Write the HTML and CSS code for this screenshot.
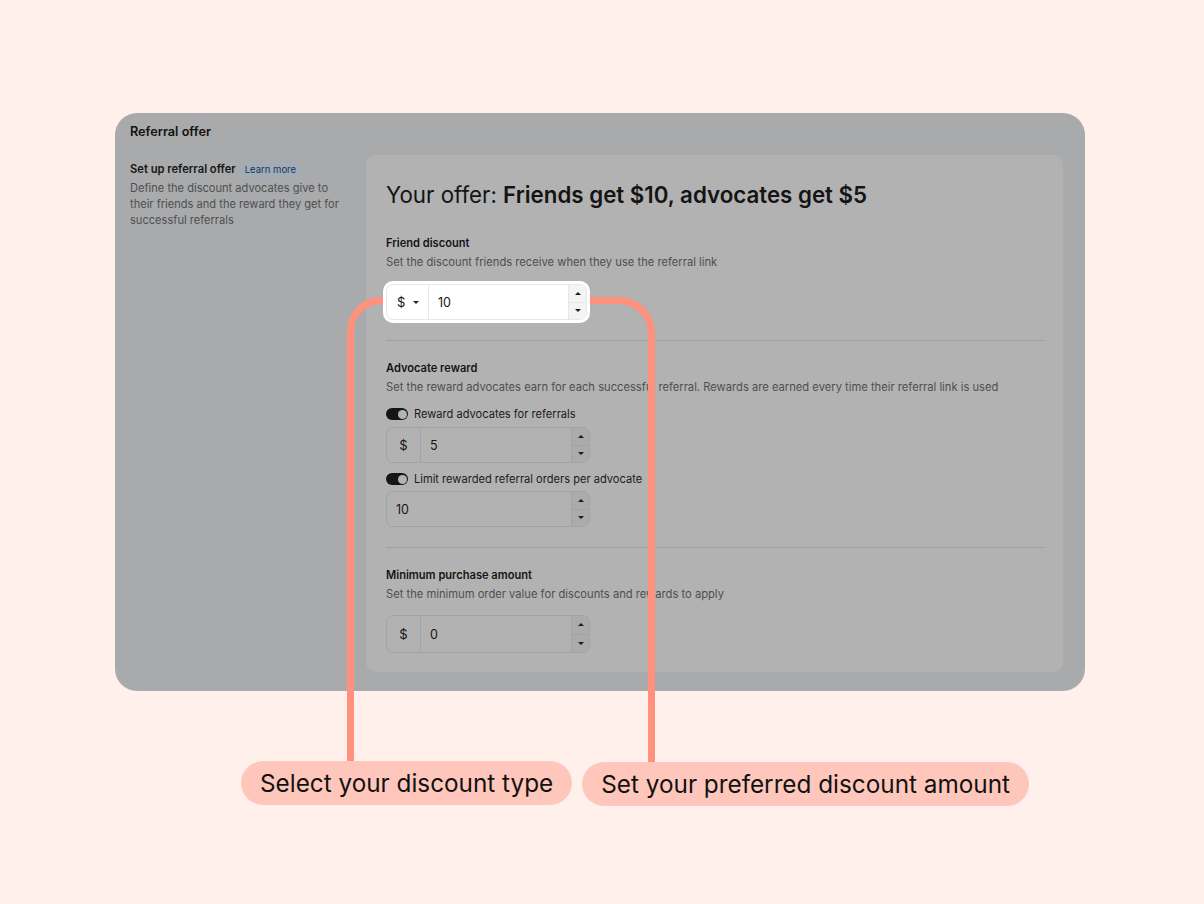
FILE: index.html
```html
<!DOCTYPE html>
<html lang="en">
<head>
<meta charset="utf-8">
<title>Referral offer</title>
<link rel="stylesheet" href="styles.css">
</head>
<body>
<div class="stage">
  <section class="panel">
    <h2 class="panel-title">Referral offer</h2>
    <div class="panel-body">
      <aside class="intro">
        <div class="intro-head">
          <span class="intro-title">Set up referral offer</span>
          <span class="badge">Learn more</span>
        </div>
        <p class="intro-text">Define the discount advocates give to their friends and the reward they get for successful referrals</p>
      </aside>
      <div class="card">
        <h1 class="offer">Your offer: <strong>Friends get $10, advocates get $5</strong></h1>

        <h3 class="group-title">Friend discount</h3>
        <p class="group-desc">Set the discount friends receive when they use the referral link</p>
        <div class="field field-hl">
          <div class="prefix prefix-select">$<span class="caret"></span></div>
          <div class="value">10</div>
          <div class="stepper"><span class="step"><i class="arr-up"></i></span><span class="step"><i class="arr-down"></i></span></div>
        </div>

        <hr class="divider">

        <h3 class="group-title">Advocate reward</h3>
        <p class="group-desc">Set the reward advocates earn for each successful referral. Rewards are earned every time their referral link is used</p>
        <div class="toggle-row toggle-first"><span class="toggle"><span class="knob"></span></span><span class="toggle-label">Reward advocates for referrals</span></div>
        <div class="field field-a">
          <div class="prefix">$</div>
          <div class="value">5</div>
          <div class="stepper"><span class="step"><i class="arr-up"></i></span><span class="step"><i class="arr-down"></i></span></div>
        </div>
        <div class="toggle-row toggle-second"><span class="toggle"><span class="knob"></span></span><span class="toggle-label">Limit rewarded referral orders per advocate</span></div>
        <div class="field field-b">
          <div class="value value-plain">10</div>
          <div class="stepper"><span class="step"><i class="arr-up"></i></span><span class="step"><i class="arr-down"></i></span></div>
        </div>

        <hr class="divider">

        <h3 class="group-title">Minimum purchase amount</h3>
        <p class="group-desc">Set the minimum order value for discounts and rewards to apply</p>
        <div class="field field-c">
          <div class="prefix">$</div>
          <div class="value">0</div>
          <div class="stepper"><span class="step"><i class="arr-up"></i></span><span class="step"><i class="arr-down"></i></span></div>
        </div>
      </div>
    </div>
  </section>

  <div class="pills">
    <div class="pill">Select your discount type</div>
    <div class="pill pill-right">Set your preferred discount amount</div>
  </div>

  <div class="conn conn-left"></div>
  <div class="conn conn-right"></div>
</div>
</body>
</html>
```

FILE: styles.css
```css
* { box-sizing: border-box; }

html, body {
  margin: 0;
  padding: 0;
  background: #fff0ec;
  font-family: Inter, "Noto Sans", "Liberation Sans", sans-serif;
  color: #151515;
}

.stage {
  position: relative;
  width: 1204px;
  height: 904px;
  overflow: hidden;
  padding-top: 113px;
}

.panel {
  margin-left: 115px;
  width: 970px;
  background: #a9aaab;
  border-radius: 22px;
  padding: 11px 22px 19px 15px;
}

.panel-title {
  margin: 0;
  font-size: 12.7px;
  line-height: 16px;
  font-weight: 600;
  color: #131313;
}

.panel-body {
  display: flex;
  margin-top: 15px;
}

.intro {
  width: 236px;
  flex: none;
  padding-top: 6px;
  padding-right: 18px;
}

.intro-head {
  display: flex;
  align-items: center;
  gap: 5px;
  height: 16px;
}

.intro-title {
  font-size: 11.2px;
  font-weight: 600;
  color: #151515;
}

.badge {
  font-size: 9.5px;
  line-height: 15px;
  height: 15px;
  padding: 0 4px;
  border-radius: 5px;
  background: #a1acb9;
  color: #25344d;
}

.intro-text {
  margin: 3px 0 0;
  font-size: 11.1px;
  line-height: 16px;
  color: #4f4f50;
}

.card {
  flex: 1;
  background: #b2b2b2;
  border-radius: 10px;
  padding: 26px 18px 19px 20px;
}

.offer {
  margin: 0;
  font-size: 22.3px;
  line-height: 28px;
  font-weight: 400;
  color: #141414;
}

.offer strong { font-weight: 600; }

.group-title {
  margin: 26px 0 0;
  font-size: 11.1px;
  line-height: 16px;
  font-weight: 600;
  color: #151515;
}

.divider + .group-title { margin-top: 19px; }

.group-desc {
  margin: 3px 0 0;
  font-size: 11.2px;
  line-height: 16px;
  color: #4f4f4f;
}

.divider {
  margin: 20px 0 0;
  border: 0;
  border-top: 1px solid #a1a1a1;
  height: 0;
}

.field {
  display: flex;
  width: 204px;
  height: 36px;
  border: 1px solid #a3a3a3;
  border-radius: 7px;
  overflow: hidden;
  font-size: 12.5px;
  color: #151515;
}

.field-hl {
  margin-top: 14px;
  width: 201px;
  background: #fff;
  border-color: #e7e8eb;
  box-shadow: 0 0 0 3px #fff;
  position: relative;
  z-index: 2;
}

.field-a { margin-top: 5px; }
.field-b { margin-top: 4px; }
.field-c { margin-top: 13px; height: 38px; }

.prefix {
  width: 34px;
  flex: none;
  display: flex;
  align-items: center;
  justify-content: center;
  border-right: 1px solid #a3a3a3;
  font-size: 13px;
}

.prefix-select {
  width: 42px;
  justify-content: flex-start;
  padding-left: 10px;
  gap: 8px;
  border-right-color: #e7e8eb;
}

.caret {
  width: 0;
  height: 0;
  border-left: 3px solid transparent;
  border-right: 3px solid transparent;
  border-top: 3px solid #222;
}

.value {
  flex: 1;
  display: flex;
  align-items: center;
  padding-left: 9px;
  font-size: 12.5px;
}

.value-plain { padding-left: 9px; }

.stepper {
  width: 18px;
  flex: none;
  display: flex;
  flex-direction: column;
  border-left: 1px solid #a3a3a3;
  background: #ababab;
}

.field-hl .stepper {
  border-left-color: #e7e8eb;
  background: #f3f4f6;
}

.step {
  flex: 1;
  display: flex;
  align-items: center;
  justify-content: center;
}

.step + .step { border-top: 1px solid #a3a3a3; }
.field-hl .step + .step { border-top-color: #e7e8eb; }

.arr-up, .arr-down {
  width: 0;
  height: 0;
  border-left: 3px solid transparent;
  border-right: 3px solid transparent;
}
.arr-up { border-bottom: 3px solid #1d1d1d; }
.arr-down { border-top: 3px solid #1d1d1d; }

.toggle-row {
  display: flex;
  align-items: center;
  gap: 6px;
  height: 16px;
}
.toggle-first { margin-top: 11px; }
.toggle-second { margin-top: 8px; }

.toggle {
  width: 22px;
  height: 12px;
  border-radius: 6px;
  background: #121614;
  display: flex;
  align-items: center;
  justify-content: flex-end;
  padding-right: 1.5px;
}

.knob {
  width: 9px;
  height: 9px;
  border-radius: 50%;
  background: #b4b4b4;
}

.toggle-label {
  font-size: 11.1px;
  color: #1b1b1b;
}

.pills {
  display: flex;
  gap: 10px;
  margin-top: 70px;
  padding-left: 241px;
}

.pill {
  height: 44px;
  line-height: 44px;
  padding: 0 19px;
  border-radius: 22px;
  background: #ffc7bc;
  font-size: 24.3px;
  color: #111;
}

.pill-right { margin-top: 1px; }

.conn {
  position: absolute;
  border: 0 solid #ff917d;
  z-index: 1;
}

.conn-left {
  left: 347px;
  top: 297px;
  width: 36px;
  height: 464px;
  border-top-width: 7px;
  border-left-width: 7px;
  border-top-left-radius: 34px;
}

.conn-right {
  left: 589px;
  top: 297px;
  width: 66px;
  height: 465px;
  border-top-width: 7px;
  border-right-width: 7px;
  border-top-right-radius: 36px;
}
```
